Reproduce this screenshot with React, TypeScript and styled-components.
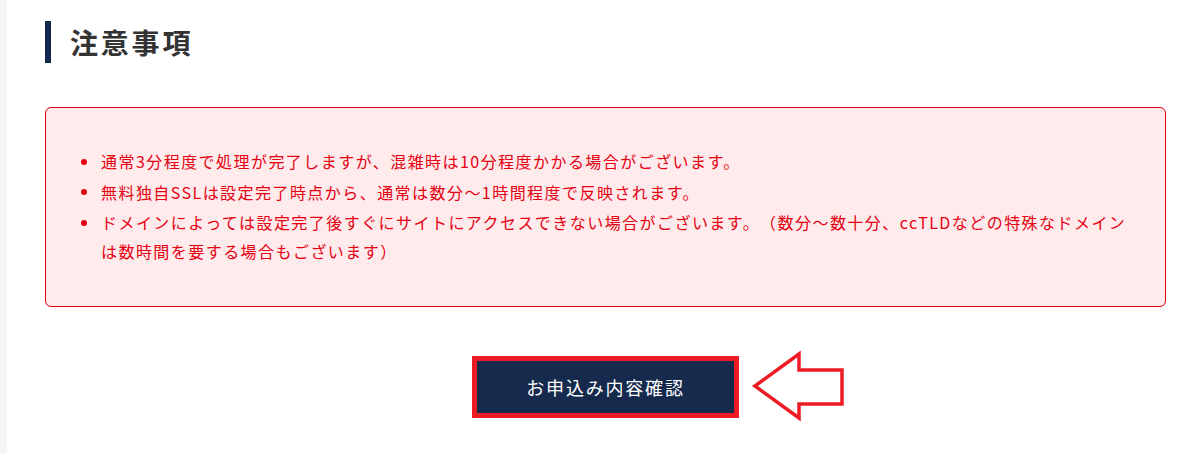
import React from "react";
import styled, { createGlobalStyle } from "styled-components";

const Global = createGlobalStyle`
  html, body { margin: 0; padding: 0; background: #ffffff; }
  body {
    font-family: "Noto Sans CJK JP", "Noto Sans", sans-serif;
    text-spacing-trim: space-all;
  }
`;

const Page = styled.div`
  display: flex;
  min-height: 453px;
`;

const SideStrip = styled.div`
  width: 7px;
  flex: none;
  background: #f5f5f5;
`;

const Main = styled.main`
  flex: 1;
  padding: 21px 23px 0 38px;
`;

const Heading = styled.h2`
  margin: 0;
  border-left: 6px solid #13284c;
  padding-left: 19px;
  height: 42px;
  line-height: 42px;
  font-size: 28px;
  font-weight: 700;
  letter-spacing: 0.1em;
  color: #333333;
`;

const NoticeBox = styled.div`
  margin-top: 44px;
  border: 1px solid #e60012;
  border-radius: 6px;
  background: #ffebec;
  padding: 39px 28px 40px 35px;
`;

const NoticeList = styled.ul`
  list-style: none;
  margin: 0;
  padding: 0;
`;

const NoticeItem = styled.li`
  position: relative;
  padding-left: 20px;
  font-size: 16px;
  line-height: 29px;
  letter-spacing: 1.45px;
  color: #e60012;
  text-spacing-trim: space-all;
  & + & { margin-top: 1.5px; }
  &::before {
    content: "";
    position: absolute;
    left: 0;
    top: 11.5px;
    width: 6px;
    height: 6px;
    border-radius: 50%;
    background: #e60012;
  }
`;

const ActionRow = styled.div`
  display: flex;
  justify-content: center;
  margin-top: 49px;
`;

const ButtonWrap = styled.div`
  position: relative;
`;

const ConfirmButton = styled.button`
  display: block;
  width: 267px;
  height: 62px;
  border: 5px solid #ed1c24;
  background: #152a4d;
  color: #ffffff;
  font-family: "Noto Sans CJK JP", "Noto Sans", sans-serif;
  font-size: 18px;
  font-weight: 400;
  letter-spacing: 0.1em;
  cursor: pointer;
  padding: 0;
`;

const ArrowMark = styled.svg`
  position: absolute;
  left: calc(100% + 13px);
  top: -7px;
  width: 95px;
  height: 73px;
`;

const notes = [
  "通常3分程度で処理が完了しますが、混雑時は10分程度かかる場合がございます。",
  "無料独自SSLは設定完了時点から、通常は数分〜1時間程度で反映されます。",
  "ドメインによっては設定完了後すぐにサイトにアクセスできない場合がございます。（数分〜数十分、ccTLDなどの特殊なドメインは数時間を要する場合もございます）",
];

export default function App() {
  return (
    <>
      <Global />
      <Page>
        <SideStrip />
        <Main>
          <Heading>注意事項</Heading>
          <NoticeBox>
            <NoticeList>
              {notes.map((n) => (
                <NoticeItem key={n}>{n}</NoticeItem>
              ))}
            </NoticeList>
          </NoticeBox>
          <ActionRow>
            <ButtonWrap>
              <ConfirmButton type="button">お申込み内容確認</ConfirmButton>
              <ArrowMark viewBox="0 0 95 73" aria-hidden="true">
                <polygon
                  points="3,37 47,5 47,21 90,21 90,55 47,55 47,69"
                  fill="#ffffff"
                  stroke="#ed1c24"
                  strokeWidth="3.5"
                  strokeLinejoin="miter"
                />
              </ArrowMark>
            </ButtonWrap>
          </ActionRow>
        </Main>
      </Page>
    </>
  );
}
